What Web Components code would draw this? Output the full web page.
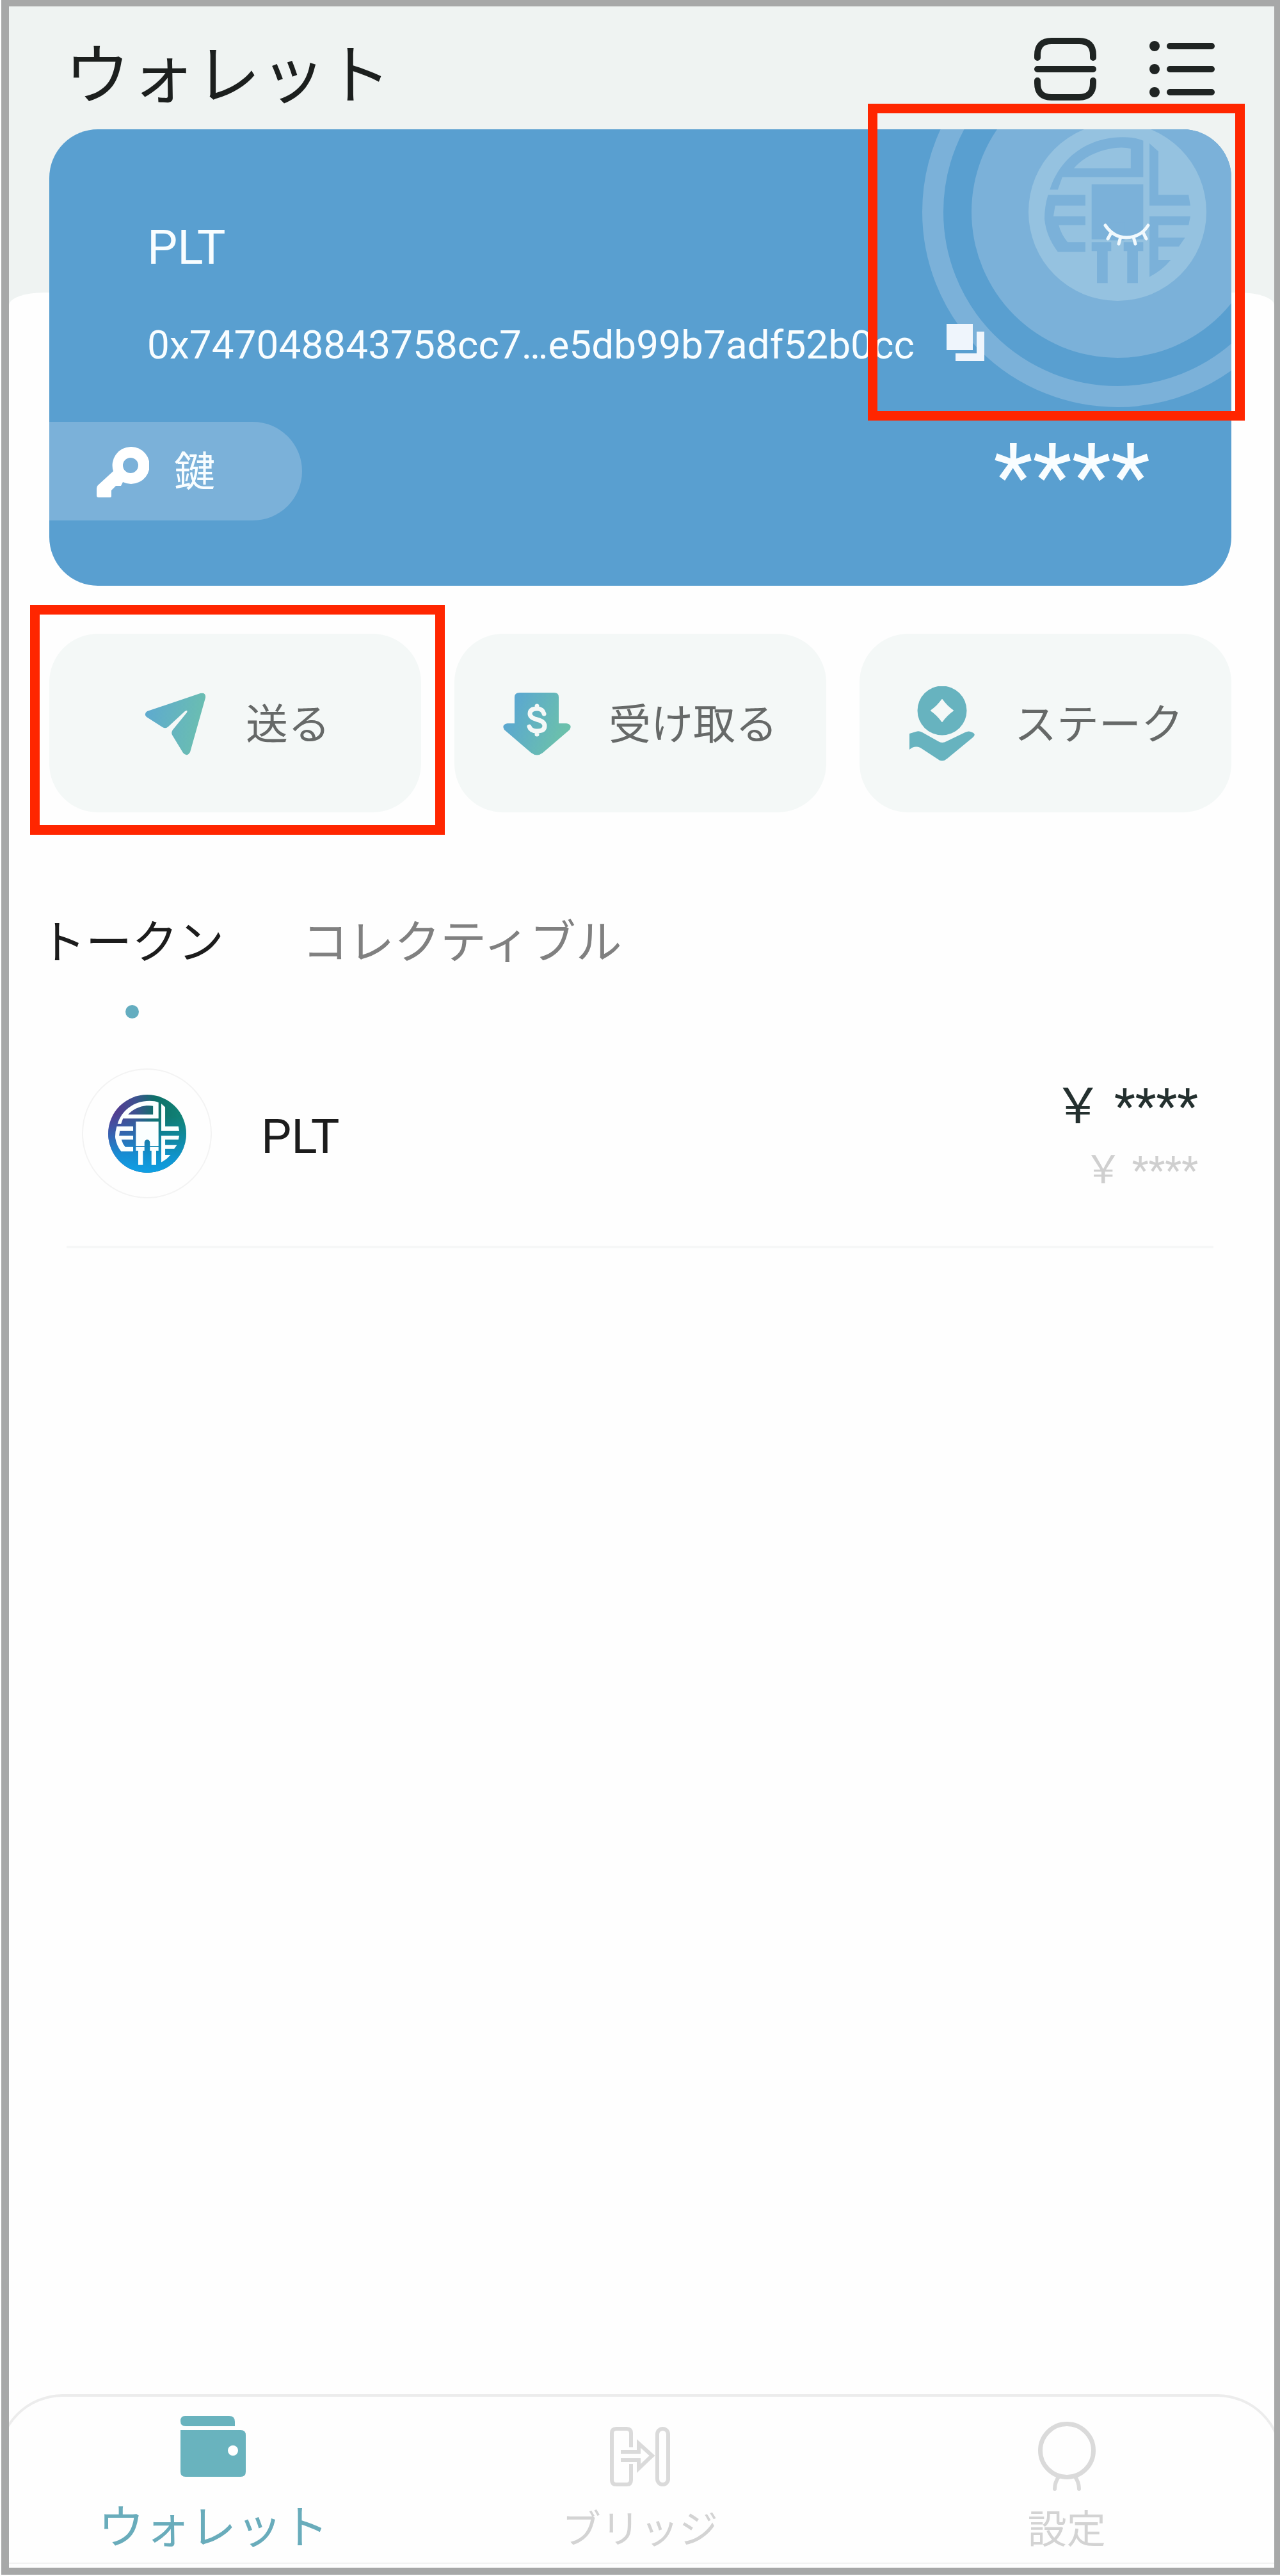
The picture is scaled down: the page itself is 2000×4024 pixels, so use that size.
<!DOCTYPE html>
<html lang="ja">
<head>
<meta charset="utf-8">
<title>ウォレット</title>
<style>
  html, body {
    margin: 0;
    padding: 0;
    background: #fff;
  }

  body {
    width: 2000px;
    height: 4024px;
    overflow: hidden;
    position: relative;
    font-family: Roboto, "Noto Sans CJK JP", sans-serif;
    line-height: 1;
    color: #1c1f1e;
  }
</style>
</head>
<body>
  <wallet-screen>
    <wallet-header slot="header">ウォレット</wallet-header>
    <wallet-card slot="card">
      <span slot="name">PLT</span>
      <span slot="address">0x747048843758cc7…e5db99b7adf52b0cc</span>
      <span slot="key">鍵</span>
      <span slot="amount">****</span>
    </wallet-card>
    <action-bar>
      <action-button icon="send">送る</action-button>
      <action-button icon="receive">受け取る</action-button>
      <action-button icon="stake">ステーク</action-button>
    </action-bar>
    <asset-tabs>
      <asset-tab active>トークン</asset-tab>
      <asset-tab>コレクティブル</asset-tab>
    </asset-tabs>
    <token-row>
      <span slot="name">PLT</span>
      <span slot="amount">&#xffe5; ****</span>
      <span slot="rate">&#xffe5; ****</span>
    </token-row>
    <bottom-nav slot="nav">
      <nav-item icon="wallet" active>ウォレット</nav-item>
      <nav-item icon="bridge">ブリッジ</nav-item>
      <nav-item icon="settings">設定</nav-item>
    </bottom-nav>
  </wallet-screen>
  <focus-frame style="left:1356px;top:162px;width:589px;height:495px"></focus-frame>
  <focus-frame style="left:47px;top:945px;width:648px;height:359px"></focus-frame>

<script>
// coin emblem, drawn on a -100..100 grid around the centre of the coin
const EMBLEM = `
  <path fill-rule="evenodd" d="M-76-25C-66-58-36-84 6-84Q20-84 29-80V-39H-62L-67-25ZM-49-49H15V-71Q8-73-2-72C-20-70-38-62-49-49Z"/>
  <path d="M36-77L46-68V-19H80L82-7H36Z"/>
  <path d="M-78-19H-36V-7H-70L-72 5H-36V15H-66Q-63 26-56 34H-36V45H-67Q-80 28-82 8Q-82-6-78-19Z"/>
  <path d="M36 5H82L80 15H46V29H76L69 39H46V54H60Q50 66 36 73Z"/>
  <path d="M-29-31H29V31H7V22A7 7 0 0 0-7 22V31H-29Z"/>
  <path d="M-29 34H-7V44H-11V80H-23V44H-29ZM7 34H29V44H23V80H11V44H7Z"/>`;

const ACTION_ICONS = {
  send: `
    <svg width="96" height="98" viewBox="0 0 96 98">
      <defs><linearGradient id="g" x1="0" y1="0.3" x2="1" y2="0.5">
        <stop offset="0" stop-color="#5eaacf"/><stop offset="1" stop-color="#6bbfaf"/>
      </linearGradient></defs>
      <path fill="url(#g)" d="M4 29L87 1Q96-1 95 8L71 93Q66 101 60 94L43 66Q41 62 44 58L66 31Q68 26 63 29L37 53Q33 57 28 54L3 38Q-2 33 4 29Z"/>
    </svg>`,
  receive: `
    <svg width="106" height="100" viewBox="0 0 106 100">
      <defs><linearGradient id="g" x1="0.1" y1="0.3" x2="0.9" y2="0.6">
        <stop offset="0" stop-color="#5ba8d0"/><stop offset="1" stop-color="#6bc0ac"/>
      </linearGradient></defs>
      <path fill="url(#g)" d="M26 1H80Q87 1 87 8V49H99Q109 51 104 59L62 95Q53 102 44 95L2 59Q-3 51 7 49H18V8Q18 1 26 1Z"/>
      <path fill="none" stroke="#f4f8f7" stroke-width="7" stroke-linecap="round" d="M64 34Q62 26 53 26Q42 26 42 34Q42 40 53 43Q65 46 65 53Q65 61 53 61Q43 61 41 54M53 22V26M53 61V66"/>
    </svg>`,
  stake: `
    <svg width="102" height="118" viewBox="0 0 102 118">
      <circle cx="51" cy="38" r="38.5" fill="#67b3bf"/>
      <path fill="#f4f8f7" d="M51 21Q58 31 68 38Q58 45 51 55Q44 45 34 38Q44 31 51 21Z" stroke="#f4f8f7" stroke-width="2" stroke-linejoin="round"/>
      <path fill="#67b3bf" d="M0 74L10 71Q15 69 20 72L45 86Q51 90 58 86L87 72Q93 69 98 72Q105 75 99 80L59 113Q51 120 43 113L17 96Q8 92 0 99Z"/>
    </svg>`
};

const NAV_ICONS = {
  wallet: `
    <svg width="110" height="130" viewBox="0 0 110 130">
      <path fill="#69b3be" d="M11 9H80Q89 9 89 18V25H12Q4 25 4 17Q4 9 11 9ZM4 31H98Q106 31 106 39V96Q106 104 98 104H12Q4 104 4 96Z"/>
      <circle cx="86" cy="63" r="8" fill="#fff"/>
    </svg>`,
  bridge: `
    <svg width="110" height="130" viewBox="0 0 110 130" fill="none" stroke="#dadada" stroke-width="6">
      <path d="M41 58V36Q41 29 34 29H18Q11 29 11 36V109Q11 116 18 116H34Q41 116 41 109V84"/>
      <path d="M25 65H53V52L74 71L53 91V78H25"/>
      <rect x="82" y="29" width="17" height="87" rx="8.5"/>
    </svg>`,
  settings: `
    <svg width="110" height="130" viewBox="0 0 110 130" fill="none" stroke="#dadada">
      <circle cx="55" cy="63" r="41.5" stroke-width="7"/>
      <path stroke-width="6" stroke-linecap="round" d="M43 103Q36 112 36 123M67 103Q74 112 74 123"/>
    </svg>`
};

class WalletScreen extends HTMLElement {
  constructor() {
    super();
    this.attachShadow({ mode: 'open' }).innerHTML = `
      <style>
        :host {
          display: flex;
          flex-direction: column;
          box-sizing: border-box;
          width: 1998px;
          height: 4022px;
          margin-left: 2px;
          border: solid #a7a8a8;
          border-width: 10px 9px 11px 12px;
          background: #eff3f2;
          overflow: hidden;
        }
        .card {
          position: relative;
          z-index: 1;
          padding: 0 67px 0 63px;
        }
        .sheet {
          flex: 1;
          margin-top: -458px;
          padding-top: 533px;
          border-radius: 55px 55px 0 0 / 20px 20px 0 0;
          background: #fefefe;
        }
        .nav {
          margin: 0 -13px 0 -18px;
          background: #fefefe;
        }
      </style>
      <slot name="header"></slot>
      <div class="card"><slot name="card"></slot></div>
      <div class="sheet"><slot></slot></div>
      <div class="nav"><slot name="nav"></slot></div>
    `;
  }
}

class WalletHeader extends HTMLElement {
  constructor() {
    super();
    this.attachShadow({ mode: 'open' }).innerHTML = `
      <style>
        :host {
          display: flex;
          justify-content: space-between;
          box-sizing: border-box;
          height: 192px;
          padding: 49px 93px 0 87px;
        }
        .title { font-size: 102px; padding-top: 9px; }
        .icons { display: flex; gap: 83px; }
      </style>
      <div class="title"><slot></slot></div>
      <div class="icons">
        <svg width="97" height="98" viewBox="0 0 97 98" fill="none" stroke="#1f2423" stroke-width="10" stroke-linecap="round">
          <path d="M5 31V27Q5 5 27 5H70Q92 5 92 27V31M5 49H92M5 67V71Q5 93 27 93H70Q92 93 92 71V67"/>
        </svg>
        <svg width="102" height="98" viewBox="0 0 102 98" fill="#1f2423">
          <circle cx="8" cy="13" r="8"/><circle cx="8" cy="49" r="8"/><circle cx="8" cy="85" r="8"/>
          <path d="M32 13H97M32 49H97M32 85H97" stroke="#1f2423" stroke-width="10" stroke-linecap="round"/>
        </svg>
      </div>
    `;
  }
}

class WalletCard extends HTMLElement {
  constructor() {
    super();
    this.attachShadow({ mode: 'open' }).innerHTML = `
      <style>
        :host {
          display: block;
          position: relative;
          box-sizing: border-box;
          height: 713px;
          padding-top: 147px;
          border-radius: 76px;
          background: #599fd0;
          color: #f8fdff;
          overflow: hidden;
        }
        .art {
          position: absolute;
          right: 0;
          top: 0;
        }
        .name, .address { position: relative; margin-left: 153px; }
        .name { font-size: 75px; }
        .address {
          display: flex;
          font-size: 62px;
          letter-spacing: 0.08px;
          margin-top: 84px;
        }
        .address svg { margin: -2px 0 0 50px; }
        .bottom {
          display: flex;
          justify-content: space-between;
          margin-top: 89px;
          padding-right: 127px;
        }
        .key {
          display: flex;
          align-items: center;
          gap: 39px;
          box-sizing: border-box;
          width: 395px;
          height: 154px;
          padding: 3px 0 0 74px;
          border-radius: 0 77px 77px 0;
          background: #7bb1d9;
          font-size: 64px;
        }
        .amount { font-size: 142px; padding-top: 16px; }
      </style>
      <svg class="art" width="500" height="460" viewBox="1424 202 500 460">
        <circle cx="1746" cy="331" r="288.5" fill="none" stroke="#7bb1d9" stroke-width="33"/>
        <circle cx="1746" cy="331" r="228" fill="#7bb1d9"/>
        <circle cx="1746" cy="331" r="139" fill="#95c2e0"/>
        <g transform="translate(1746 331) scale(1.39)" fill="#7bb1d9">${EMBLEM}<path d="M-8 12H8V32H-8Z"/></g>
        <path d="M1727 352Q1740 371 1760 371Q1782 371 1794 352M1736 364L1731 373M1751 370L1748 381M1771 370L1774 381M1786 363L1791 373" fill="none" stroke="#f1f9fd" stroke-width="5" stroke-linecap="round"/>
      </svg>
      <div class="name"><slot name="name"></slot></div>
      <div class="address">
        <slot name="address"></slot>
        <svg width="60" height="58" viewBox="0 0 60 58" fill="#eff5fc">
          <path d="M0 0H41V41H0ZM47 12H59V58H14V46H47Z"/>
        </svg>
      </div>
      <div class="bottom">
        <div class="key">
          <svg width="82" height="80" viewBox="0 0 82 80">
            <path fill="#fff" fill-rule="evenodd" d="M53 0A29 29 0 1 1 41 55L38 61H30L23 68V77Q23 79 20 79H3Q0 79 0 76V65Q0 62 2 60L26 38A29 29 0 0 1 53 0ZM53 17A12 12 0 1 0 53 41A12 12 0 0 0 53 17Z"/>
          </svg>
          <slot name="key"></slot>
        </div>
        <div class="amount"><slot name="amount"></slot></div>
      </div>
    `;
  }
}

class ActionBar extends HTMLElement {
  constructor() {
    super();
    this.attachShadow({ mode: 'open' }).innerHTML = `
      <style>
        :host {
          display: grid;
          grid-template-columns: repeat(3, 1fr);
          gap: 52px;
          height: 279px;
          padding: 0 67px 0 63px;
        }
      </style>
      <slot></slot>
    `;
  }
}

class ActionButton extends HTMLElement {
  connectedCallback() {
    const icon = this.getAttribute('icon');
    const pad = { send: 149, receive: 76, stake: 78 }[icon];
    this.attachShadow({ mode: 'open' }).innerHTML = `
      <style>
        :host {
          display: flex;
          align-items: center;
          gap: ${icon === 'receive' ? 59 : 62}px;
          box-sizing: border-box;
          padding: 3px 0 0 ${pad}px;
          border-radius: 76px;
          background: #f4f8f7;
          color: #666968;
          font-size: 66px;
          white-space: nowrap;
        }
        svg { flex: none; }
        span { padding-top: 3px; }
      </style>
      ${ACTION_ICONS[icon]}
      <span><slot></slot></span>
    `;
  }
}

class AssetTabs extends HTMLElement {
  constructor() {
    super();
    this.attachShadow({ mode: 'open' }).innerHTML = `
      <style>
        :host {
          display: flex;
          gap: 122px;
          height: 233px;
          padding: 168px 0 0 48px;
        }
      </style>
      <slot></slot>
    `;
  }
}

class AssetTab extends HTMLElement {
  connectedCallback() {
    const active = this.hasAttribute('active');
    this.attachShadow({ mode: 'open' }).innerHTML = `
      <style>
        :host {
          display: flex;
          flex-direction: column;
          align-items: center;
          gap: 61px;
          font-size: 72px;
          color: ${active ? '#1c1c1c' : '#808080'};
        }
        .dot {
          width: 21px;
          height: 21px;
          border-radius: 50%;
          background: #64adc0;
        }
      </style>
      <span><slot></slot></span>
      ${active ? '<div class="dot"></div>' : ''}
    `;
  }
}

class TokenRow extends HTMLElement {
  constructor() {
    super();
    this.attachShadow({ mode: 'open' }).innerHTML = `
      <style>
        :host {
          display: flex;
          align-items: flex-start;
          height: 276px;
          margin: 0 95px 0 90px;
          padding: 0 24px 0 24px;
          border-bottom: 4px solid #f6f7f7;
        }
        .coin {
          display: flex;
          align-items: center;
          justify-content: center;
          box-sizing: border-box;
          width: 203px;
          height: 203px;
          margin-top: -1px;
          border: 2px solid #f3f3f3;
          border-radius: 50%;
        }
        .name { margin: 68px auto 0 77px; font-size: 75px; color: #1c1c1c; }
        .amounts {
          display: flex;
          flex-direction: column;
          align-items: flex-end;
          gap: 32px;
          padding-top: 20px;
        }
        .amount { font-size: 76px; color: #24302f; }
        .rate { font-size: 60px; color: #cfcfcf; }
      </style>
      <div class="coin">
        <svg width="122" height="122" viewBox="-100 -100 200 200">
          <defs>
            <linearGradient id="ring" x1="0" y1="0" x2="1" y2="0">
              <stop offset="0" stop-color="#5b3590"/>
              <stop offset="0.35" stop-color="#3d5190"/>
              <stop offset="0.6" stop-color="#0e7069"/>
              <stop offset="1" stop-color="#118578"/>
            </linearGradient>
            <linearGradient id="glow" x1="0.4" y1="1" x2="0.45" y2="0.25">
              <stop offset="0" stop-color="#0fa0e6"/>
              <stop offset="0.3" stop-color="#0f98de" stop-opacity="0.85"/>
              <stop offset="1" stop-color="#1090d0" stop-opacity="0"/>
            </linearGradient>
          </defs>
          <circle r="100" fill="url(#ring)"/>
          <circle r="100" fill="url(#glow)"/>
          <g fill="#fbffff">${EMBLEM}</g>
        </svg>
      </div>
      <div class="name"><slot name="name"></slot></div>
      <div class="amounts">
        <div class="amount"><slot name="amount"></slot></div>
        <div class="rate"><slot name="rate"></slot></div>
      </div>
    `;
  }
}

class BottomNav extends HTMLElement {
  constructor() {
    super();
    this.attachShadow({ mode: 'open' }).innerHTML = `
      <style>
        :host {
          display: grid;
          grid-template-columns: repeat(3, 1fr);
          box-sizing: border-box;
          height: 271px;
          border: 4px solid #ececec;
          border-bottom: 0;
          border-radius: 102px 102px 0 0;
          box-shadow: inset 0 -6px #fefefe, inset 0 -8px #f2f2f2;
        }
      </style>
      <slot></slot>
    `;
  }
}

class NavItem extends HTMLElement {
  connectedCallback() {
    const active = this.hasAttribute('active');
    this.attachShadow({ mode: 'open' }).innerHTML = `
      <style>
        :host {
          display: flex;
          flex-direction: column;
          align-items: center;
          padding-top: 21px;
          font-size: ${active ? 72 : 61}px;
          color: ${active ? '#69acbb' : '#d3d3d3'};
        }
        span { margin-top: ${active ? 18 : 27}px; }
      </style>
      ${NAV_ICONS[this.getAttribute('icon')]}
      <span><slot></slot></span>
    `;
  }
}

class FocusFrame extends HTMLElement {
  constructor() {
    super();
    this.attachShadow({ mode: 'open' }).innerHTML = `
      <style>
        :host {
          display: block;
          position: absolute;
          z-index: 2;
          box-sizing: border-box;
          border: 15px solid #ff2600;
        }
      </style>
    `;
  }
}

customElements.define('wallet-screen', WalletScreen);
customElements.define('wallet-header', WalletHeader);
customElements.define('wallet-card', WalletCard);
customElements.define('action-bar', ActionBar);
customElements.define('action-button', ActionButton);
customElements.define('asset-tabs', AssetTabs);
customElements.define('asset-tab', AssetTab);
customElements.define('token-row', TokenRow);
customElements.define('bottom-nav', BottomNav);
customElements.define('nav-item', NavItem);
customElements.define('focus-frame', FocusFrame);
</script>
</body>
</html>
